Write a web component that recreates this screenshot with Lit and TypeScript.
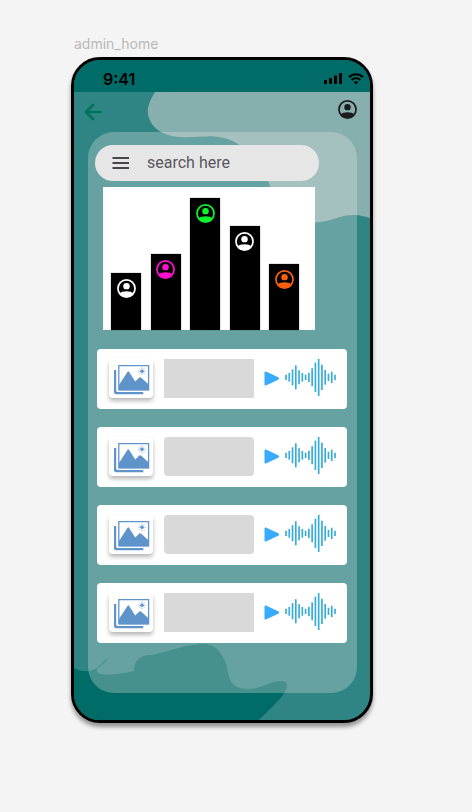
import { LitElement, html, svg, css } from "lit";
import { customElement, property } from "lit/decorators.js";
import { styleMap } from "lit/directives/style-map.js";
import { classMap } from "lit/directives/class-map.js";

const bars = [
  { name: "First user", height: 57, color: "#ffffff" },
  { name: "Second user", height: 76, color: "#ff0fd0" },
  { name: "Third user", height: 132, color: "#0cf52c" },
  { name: "Fourth user", height: 104, color: "#ffffff" },
  { name: "Fifth user", height: 66, color: "#fa5f0c" },
];

const tracks = [{ rounded: false }, { rounded: true }, { rounded: true }, { rounded: false }];

// Half-heights of the waveform strokes, left to right.
const wave = [8, 13, 24, 36, 21, 13, 8, 14, 27, 44, 56, 38, 22, 11, 17, 8];

const userIcon = html`
  <svg class="user" viewBox="0 0 20 20" aria-hidden="true">
    <circle cx="10" cy="10" r="9" fill="none" stroke="currentColor" stroke-width="1.8" />
    <circle cx="10" cy="7.5" r="3.4" fill="currentColor" />
    <path d="M2.8 15.4C5 12.1 15 12.1 17.2 15.4A9.4 9.4 0 0 1 2.8 15.4Z" fill="currentColor" />
  </svg>
`;

@customElement("track-card")
class TrackCard extends LitElement {
  @property({ type: Boolean }) rounded = false;

  static styles = css`
    :host {
      display: flex;
      align-items: flex-start;
      box-sizing: border-box;
      height: 60px;
      padding: 10px 11px 0 12px;
      background: #fff;
      border-radius: 4px;
    }
    .thumb {
      display: flex;
      flex: none;
      box-sizing: border-box;
      width: 44px;
      height: 39px;
      margin-right: 11px;
      padding: 6px 0 0 5px;
      border-radius: 4px;
      background: #fff;
      box-shadow: 0 3px 4px rgba(0, 0, 0, 0.28);
    }
    .picture {
      width: 36px;
      height: 30px;
    }
    .title {
      flex: 1;
      height: 39px;
      margin-right: 10px;
      background: #d9d9d9;
    }
    .title.rounded {
      border-radius: 4px;
    }
    .play {
      display: flex;
      align-items: center;
      flex: none;
      width: 15px;
      height: 39px;
      margin-right: 6px;
      padding: 0;
      border: 0;
      background: none;
    }
    .play svg {
      width: 15px;
      height: 15px;
    }
    .wave {
      flex: none;
      width: 51px;
      height: 38px;
    }
  `;

  render() {
    return html`
      <div class="thumb">
        <svg class="picture" viewBox="0 0 36 30" fill="#5f94cb" aria-hidden="true">
          <path d="M0 5H2.2V25.6Q2.2 27 3.6 27H29.300V29.200H2Q0 29.200 0 27.200Z" />
          <rect x="4.800" y="0.600" width="29.800" height="24.300" fill="none" stroke="#5f94cb" stroke-width="1.300" />
          <path d="M5 20L13.400 6.900Q14.300 5.600 15.200 6.900L21.200 16.500L25.400 12.600Q26.200 11.900 27 12.600L35 19.800V25.300H5Z" />
          <circle cx="28" cy="6.200" r="1.800" />
          <path
            d="M28 2.600V3.700M28 8.700V9.800M24.400 6.200H25.500M30.500 6.200H31.600M25.500 3.700L26.200 4.400M29.800 8L30.500 8.700M25.500 8.700L26.200 8M29.800 4.400L30.500 3.700"
            stroke="#5f94cb"
            stroke-width="0.900"
          />
        </svg>
      </div>
      <div class=${classMap({ title: true, rounded: this.rounded })}></div>
      <button class="play" aria-label="Play">
        <svg viewBox="0 0 15 15" aria-hidden="true">
          <path
            d="M1.500 1.500L13.800 7.100Q14.200 7.500 13.800 7.900L1.500 13.500Z"
            fill="#38abff"
            stroke="#38abff"
            stroke-width="2"
            stroke-linejoin="round"
          />
        </svg>
      </button>
      <svg class="wave" viewBox="0 0 153 114" aria-hidden="true">
        ${wave.map((h, i) => {
          const x = 3 + i * 9.8;
          return svg`<line x1=${x} x2=${x} y1=${55 - h} y2=${55 + h} stroke="#35abd8" stroke-width="5" />`;
        })}
      </svg>
    `;
  }
}

@customElement("app-root")
class AppRoot extends LitElement {
  static styles = css`
    :host {
      display: block;
      box-sizing: border-box;
      min-height: 100vh;
      padding: 35px 99px 40px 71px;
      background: #f4f4f4;
      font-family: Inter, "Liberation Sans", sans-serif;
    }
    .frame-name {
      margin: 0 0 5px 3px;
      font-size: 14px;
      line-height: 17px;
      font-weight: 400;
      color: #b8b8b8;
    }
    .phone {
      position: relative;
      overflow: hidden;
      border: 3px solid #000;
      border-radius: 29px;
      background: #2f8583;
      box-shadow: 0 4px 4px rgba(0, 0, 0, 0.4);
    }
    .backdrop {
      position: absolute;
      inset: 0;
      width: 100%;
      height: 100%;
    }
    .content {
      position: relative;
      padding-bottom: 27px;
    }
    .status {
      display: flex;
      align-items: center;
      box-sizing: border-box;
      height: 32px;
      padding: 5px 6px 0 29px;
      background: #016b67;
    }
    .time {
      flex: 1;
      font-size: 16px;
      line-height: 20px;
      font-weight: 600;
    }
    .signal {
      width: 18px;
      height: 11px;
      margin-right: 6px;
    }
    .wifi {
      width: 16px;
      height: 12px;
    }
    .toolbar {
      display: flex;
      align-items: flex-start;
      justify-content: space-between;
      height: 32px;
      padding: 8px 13px 0 7px;
    }
    .icon-button {
      display: flex;
      padding: 0;
      border: 0;
      background: none;
      color: #1d1b20;
    }
    .back {
      width: 24px;
      height: 24px;
      color: #04735b;
    }
    .user {
      display: block;
      width: 19px;
      height: 19px;
    }
    .panel {
      margin: 0 13px 0 14px;
      padding: 13px 10px 50px 7px;
      border-radius: 26px;
      background: rgba(232, 232, 232, 0.3);
    }
    .search {
      display: flex;
      align-items: center;
      box-sizing: border-box;
      height: 36px;
      margin: 0 28px 6px 0;
      padding: 0 17px;
      border-radius: 18px;
      background: #e6e6e6;
    }
    .menu {
      width: 18px;
      height: 12px;
      margin-right: 17px;
    }
    .query {
      flex: 1;
      min-width: 0;
      padding: 0;
      border: 0;
      outline: 0;
      background: none;
      font: 400 16px/20px Roboto, "Liberation Sans", sans-serif;
      color: #49454f;
    }
    .query::placeholder {
      color: #5a565f;
      opacity: 1;
    }
    .chart {
      display: flex;
      align-items: flex-end;
      justify-content: space-between;
      box-sizing: border-box;
      height: 143px;
      margin: 0 32px 19px 8px;
      padding: 0 16px 0 8px;
      background: #fff;
    }
    .bar {
      display: flex;
      justify-content: center;
      box-sizing: border-box;
      width: 30px;
      padding-top: 6px;
      background: #000;
      box-shadow: 0 0 1px rgba(0, 0, 0, 0.6);
    }
    .tracks {
      display: grid;
      gap: 18px;
      margin-left: 2px;
    }
  `;

  render() {
    return html`
      <h1 class="frame-name">admin_home</h1>
      <main class="phone">
        <svg class="backdrop" viewBox="0 0 296 660" preserveAspectRatio="none" aria-hidden="true">
          <path
            fill="#87afae"
            d="M81 32C75 42 73 48 74 54C76 67 88 76 106 77C124 78 136 74 150 78C176 85 190 108 196 126C206 151 225 163 241 162.500C258 162 264 155 280 155C287 155 292 157 296 158V32Z"
          />
          <path
            fill="#016b67"
            d="M0 608C8 613 18 612 24 607C28 603 31 600 34.500 597.500C31 603 26 606 23 609C21 615 30 617 60 611C60 600 67 594 79 595L112 586Q118 584.500 121 585C136 581 144 588 149 597C156 609 152 616 159 624C163 629 176 631 189 626C200 621 212 619 213 624C213 634 203 642 185 660H0Z"
          />
        </svg>
        <div class="content">
          <div class="status">
            <time class="time">9:41</time>
            <svg class="signal" viewBox="0 0 18 11" aria-hidden="true">
              <rect x="0" y="7" width="3" height="4" rx="0.8" />
              <rect x="5" y="5" width="3" height="6" rx="0.8" />
              <rect x="10" y="2.600" width="3" height="8.400" rx="0.8" />
              <rect x="15" y="0" width="3" height="11" rx="0.8" />
            </svg>
            <svg class="wifi" viewBox="0 0 16 12" aria-hidden="true">
              <path d="M1 4.200C5 0.300 11 0.300 15 4.200M3.600 7C6.200 4.600 9.800 4.600 12.400 7" fill="none" stroke="#000" stroke-width="2" />
              <path d="M5.700 9.100C7 7.900 9 7.900 10.300 9.100L8 11.500Z" />
            </svg>
          </div>
          <header class="toolbar">
            <button class="icon-button" aria-label="Back">
              <svg class="back" viewBox="0 0 24 24" aria-hidden="true">
                <path
                  d="M19.500 12H5.500M12 5L5 12L12 19"
                  fill="none"
                  stroke="currentColor"
                  stroke-width="2.600"
                  stroke-linecap="round"
                  stroke-linejoin="round"
                />
              </svg>
            </button>
            <button class="icon-button" aria-label="Account">${userIcon}</button>
          </header>
          <section class="panel">
            <form class="search" role="search">
              <button class="icon-button" type="button" aria-label="Menu">
                <svg class="menu" viewBox="0 0 18 12" aria-hidden="true">
                  <path d="M0.500 1H17M0.500 6H17M0.500 11H17" stroke="#49454f" stroke-width="1.800" />
                </svg>
              </button>
              <input class="query" type="text" placeholder="search here" aria-label="search here" />
            </form>
            <div class="chart">
              ${bars.map(
                (b) => html`
                  <div
                    class="bar"
                    role="img"
                    aria-label=${b.name}
                    style=${styleMap({ height: `${b.height}px`, color: b.color })}
                  >
                    ${userIcon}
                  </div>
                `,
              )}
            </div>
            <div class="tracks">
              ${tracks.map((t) => html`<track-card ?rounded=${t.rounded}></track-card>`)}
            </div>
          </section>
        </div>
      </main>
    `;
  }
}
